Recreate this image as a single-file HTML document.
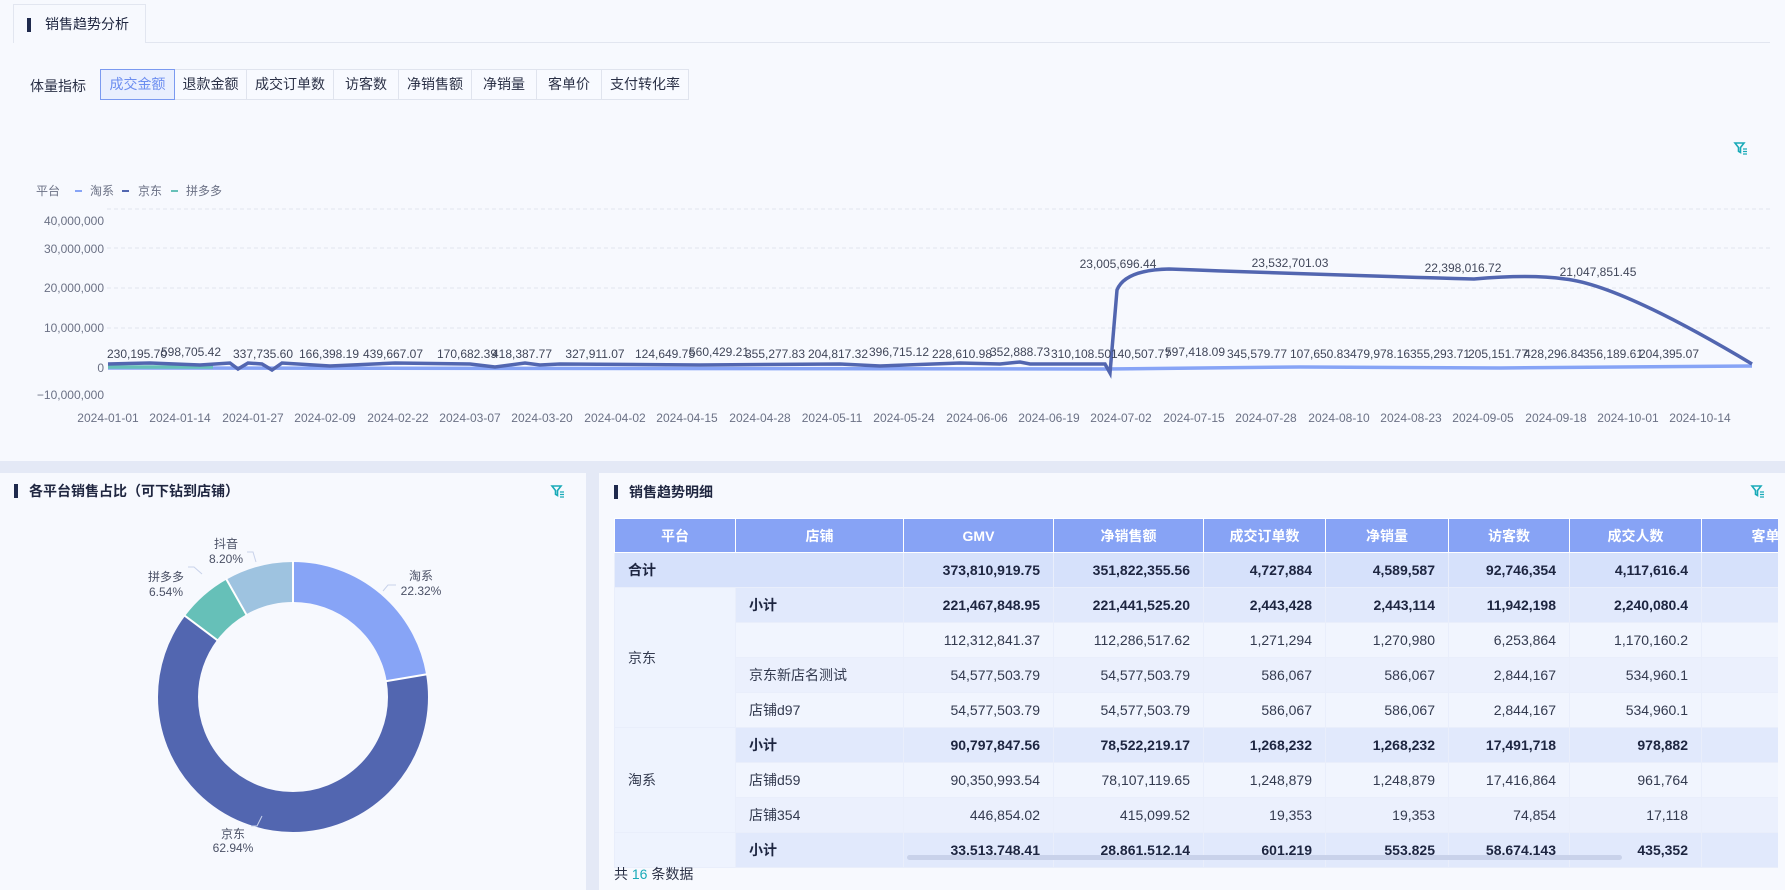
<!DOCTYPE html>
<html><head><meta charset="utf-8"><style>
*{margin:0;padding:0;box-sizing:border-box}
body{width:1785px;height:890px;background:#e4e9f6;font-family:"Liberation Sans","Noto Sans CJK SC",sans-serif;position:relative;overflow:hidden;color:#1f2640}
.abs{position:absolute}
.panel{position:absolute;background:#f7f9fe}
.tab{position:absolute;left:13px;top:4px;width:133px;height:39px;border:1px solid #e2e6f0;border-bottom:none;background:#f7f9fe;font-size:14px;line-height:38px;padding-left:31px;color:#1f2640}
.bar{position:absolute;width:4px;height:14px;background:#1f2a4d}
.btns{position:absolute;left:101px;top:69px;height:31px;display:flex}
.btns div{border:1px solid #e0e4ee;margin-left:-1px;font-size:14px;line-height:29px;text-align:center;color:#2a3046;background:#f8faff}
.btns .on{border-color:#7b9af0;color:#6d8ef0;background:#e9effe;z-index:2}
.ttl{position:absolute;font-size:14px;font-weight:bold;color:#1f2640}
table{border-collapse:collapse;table-layout:fixed;font-size:14px}
td,th{height:35px;border:1px solid #e9eefb;padding:0 13px;white-space:nowrap;overflow:hidden}
th{background:#87a3f5;color:#fff;font-weight:bold;height:34px;border-color:#fff;text-align:center}
td{text-align:right;color:#333a4f}
td.l{text-align:left}
tr.sum td{background:#d6e1fb;font-weight:bold;color:#1d2540}
tr.sub td{background:#e1e9fc;font-weight:bold;color:#1d2540}
tr.a td{background:#f1f5fe}
tr.b td{background:#ebf0fd}
td.pf{background:#eef3fe!important;font-weight:normal!important;color:#333a4f!important;text-align:left}
</style></head><body>
<div class="panel" style="left:0;top:0;width:1785px;height:461px"></div>
<div class="abs" style="left:13px;top:42px;width:1757px;height:1px;background:#e2e6f0"></div>
<div class="tab"><span class="bar" style="left:13px;top:13px"></span>销售趋势分析</div>
<div class="abs" style="left:30px;top:76px;font-size:14px;color:#2a3046">体量指标</div>
<div class="btns">
<div class="on" style="width:75px">成交金额</div><div style="width:73px">退款金额</div><div style="width:88px">成交订单数</div><div style="width:66px">访客数</div><div style="width:74px">净销售额</div><div style="width:66px">净销量</div><div style="width:66px">客单价</div><div style="width:88px">支付转化率</div>
</div>
<svg class="abs" style="left:1733px;top:140px" width="16" height="16" viewBox="0 0 16 16"><path d="M2 3h9l-3.5 4.5v5l-2-1.2V7.5z" fill="none" stroke="#19aab8" stroke-width="1.6"/><path d="M10 9h4M10 11.5h4M10 14h4" stroke="#19aab8" stroke-width="1.3"/></svg>
<svg class="abs" style="left:0;top:0" width="1785" height="461">
<g font-size="12" fill="#6b7185" font-family="Liberation Sans,Noto Sans CJK SC,sans-serif">
<text x="36" y="195">平台</text>
<rect x="75" y="190" width="7" height="2" fill="#87a4f6"/><text x="90" y="195">淘系</text>
<rect x="122" y="190" width="7" height="2" fill="#5266b0"/><text x="138" y="195">京东</text>
<rect x="171" y="190" width="7" height="2" fill="#66c0b8"/><text x="186" y="195">拼多多</text>
<g text-anchor="end"><text x="104" y="225">40,000,000</text><text x="104" y="253">30,000,000</text><text x="104" y="292">20,000,000</text><text x="104" y="332">10,000,000</text><text x="104" y="372">0</text><text x="104" y="399">−10,000,000</text></g>
</g>
<g stroke="#e2e5ee" stroke-dasharray="4 3"><line x1="107" y1="209" x2="1770" y2="209"/><line x1="107" y1="248" x2="1770" y2="248"/><line x1="107" y1="288" x2="1770" y2="288"/><line x1="107" y1="328" x2="1770" y2="328"/></g>
<path d="M108 368 L1105 369 L1300 367 L1500 368 L1752 366" fill="none" stroke="#87a4f6" stroke-width="3.5"/>
<path d="M108 367 L213 367" stroke="#66c0b8" stroke-width="3.5"/>
<path d="M108 364 L150 363 L200 365 L230 363 L238 369 L248 363 L262 364 L272 370 L282 363 L330 366 L395 363 L470 364 L495 367 L525 363 L540 365 L560 364 L700 365 L840 364 L880 366 L960 363 L1000 364 L1020 362 L1030 364 L1105 364 L1110 373 L1117 290 Q1125 270 1169 269 Q1300 274 1474 279 Q1530 274 1565 279 Q1620 285 1752 364" fill="none" stroke="#5266b0" stroke-width="3.5"/>
<g font-size="12" fill="#404659" text-anchor="middle" font-family="Liberation Sans,sans-serif">
<text x="137" y="358">230,195.70</text><text x="191" y="356">598,705.42</text><text x="263" y="358">337,735.60</text><text x="329" y="358">166,398.19</text><text x="393" y="358">439,667.07</text><text x="467" y="358">170,682.39</text><text x="522" y="358">418,387.77</text><text x="595" y="358">327,911.07</text><text x="665" y="358">124,649.75</text><text x="719" y="356">560,429.21</text><text x="775" y="358">355,277.83</text><text x="838" y="358">204,817.32</text><text x="899" y="356">396,715.12</text><text x="962" y="358">228,610.98</text><text x="1020" y="356">352,888.73</text><text x="1081" y="358">310,108.50</text><text x="1141" y="358">140,507.77</text><text x="1195" y="356">597,418.09</text><text x="1257" y="358">345,579.77</text><text x="1320" y="358">107,650.83</text><text x="1380" y="358">479,978.16</text><text x="1440" y="358">355,293.71</text><text x="1498" y="358">205,151.77</text><text x="1554" y="358">428,296.84</text><text x="1613" y="358">356,189.61</text><text x="1669" y="358">204,395.07</text>
<text x="1118" y="268">23,005,696.44</text><text x="1290" y="267">23,532,701.03</text><text x="1463" y="272">22,398,016.72</text><text x="1598" y="276">21,047,851.45</text>
</g>
<g font-size="12" fill="#6b7185" text-anchor="middle" font-family="Liberation Sans,sans-serif">
<text x="108" y="422">2024-01-01</text><text x="180" y="422">2024-01-14</text><text x="253" y="422">2024-01-27</text><text x="325" y="422">2024-02-09</text><text x="398" y="422">2024-02-22</text><text x="470" y="422">2024-03-07</text><text x="542" y="422">2024-03-20</text><text x="615" y="422">2024-04-02</text><text x="687" y="422">2024-04-15</text><text x="760" y="422">2024-04-28</text><text x="832" y="422">2024-05-11</text><text x="904" y="422">2024-05-24</text><text x="977" y="422">2024-06-06</text><text x="1049" y="422">2024-06-19</text><text x="1121" y="422">2024-07-02</text><text x="1194" y="422">2024-07-15</text><text x="1266" y="422">2024-07-28</text><text x="1339" y="422">2024-08-10</text><text x="1411" y="422">2024-08-23</text><text x="1483" y="422">2024-09-05</text><text x="1556" y="422">2024-09-18</text><text x="1628" y="422">2024-10-01</text><text x="1700" y="422">2024-10-14</text>
</g>
</svg>

<div class="panel" style="left:0;top:473px;width:586px;height:417px"></div>
<div class="panel" style="left:599px;top:473px;width:1186px;height:417px"></div>
<span class="bar abs" style="left:14px;top:484px"></span>
<div class="ttl" style="left:29px;top:481px">各平台销售占比（可下钻到店铺）</div>
<svg class="abs" style="left:550px;top:483px" width="16" height="16" viewBox="0 0 16 16"><path d="M2 3h9l-3.5 4.5v5l-2-1.2V7.5z" fill="none" stroke="#19aab8" stroke-width="1.6"/><path d="M10 9h4M10 11.5h4M10 14h4" stroke="#19aab8" stroke-width="1.3"/></svg>
<span class="bar abs" style="left:614px;top:485px"></span>
<div class="ttl" style="left:629px;top:482px">销售趋势明细</div>
<svg class="abs" style="left:1750px;top:483px" width="16" height="16" viewBox="0 0 16 16"><path d="M2 3h9l-3.5 4.5v5l-2-1.2V7.5z" fill="none" stroke="#19aab8" stroke-width="1.6"/><path d="M10 9h4M10 11.5h4M10 14h4" stroke="#19aab8" stroke-width="1.3"/></svg>

<svg class="abs" style="left:0;top:473px" width="586" height="417">
<g transform="translate(293,224) rotate(-90)" fill="none" stroke-width="40">
<circle r="115" stroke="#87a4f6" stroke-dasharray="161.28 800"/>
<circle r="115" stroke="#5266b0" stroke-dasharray="454.79 800" stroke-dashoffset="-161.28"/>
<circle r="115" stroke="#66c0b8" stroke-dasharray="47.26 800" stroke-dashoffset="-616.07"/>
<circle r="115" stroke="#9ec3e0" stroke-dasharray="59.25 800" stroke-dashoffset="-663.33"/>
<g stroke="#fff" stroke-width="2"><line x1="94" y1="0" x2="136" y2="0"/><line x1="94" y1="0" x2="136" y2="0" transform="rotate(80.35)"/><line x1="94" y1="0" x2="136" y2="0" transform="rotate(306.9)"/><line x1="94" y1="0" x2="136" y2="0" transform="rotate(330.5)"/></g>
</g>
<g fill="none" stroke="#c8d2ea" stroke-width="1"><path d="M383 118 l5 -6 h8"/><path d="M256 89 l-3 -10 h-6"/><path d="M202 101 l-8 -7 h-6"/><path d="M262 343 l-5 10 h-6"/></g>
<g font-size="12" fill="#4b5166" text-anchor="middle" font-family="Liberation Sans,Noto Sans CJK SC,sans-serif">
<text x="421" y="107">淘系</text><text x="421" y="122">22.32%</text>
<text x="226" y="75">抖音</text><text x="226" y="90">8.20%</text>
<text x="166" y="108">拼多多</text><text x="166" y="123">6.54%</text>
<text x="233" y="365">京东</text><text x="233" y="379">62.94%</text>
</g>
</svg>

<div class="abs" style="left:614px;top:518px;width:1164px;height:352px;overflow:hidden">
<table style="width:1229px">
<colgroup><col style="width:121px"><col style="width:168px"><col style="width:150px"><col style="width:150px"><col style="width:122px"><col style="width:123px"><col style="width:121px"><col style="width:132px"><col style="width:142px"></colgroup>
<tr><th>平台</th><th>店铺</th><th>GMV</th><th>净销售额</th><th>成交订单数</th><th>净销量</th><th>访客数</th><th>成交人数</th><th>客单价</th></tr>
<tr class="sum"><td class="l" colspan="2">合计</td><td>373,810,919.75</td><td>351,822,355.56</td><td>4,727,884</td><td>4,589,587</td><td>92,746,354</td><td>4,117,616.4</td><td></td></tr>
<tr class="sub"><td class="pf" rowspan="4">京东</td><td class="l">小计</td><td>221,467,848.95</td><td>221,441,525.20</td><td>2,443,428</td><td>2,443,114</td><td>11,942,198</td><td>2,240,080.4</td><td></td></tr>
<tr class="a"><td class="l"></td><td>112,312,841.37</td><td>112,286,517.62</td><td>1,271,294</td><td>1,270,980</td><td>6,253,864</td><td>1,170,160.2</td><td></td></tr>
<tr class="b"><td class="l">京东新店名测试</td><td>54,577,503.79</td><td>54,577,503.79</td><td>586,067</td><td>586,067</td><td>2,844,167</td><td>534,960.1</td><td>1</td></tr>
<tr class="a"><td class="l">店铺d97</td><td>54,577,503.79</td><td>54,577,503.79</td><td>586,067</td><td>586,067</td><td>2,844,167</td><td>534,960.1</td><td>1</td></tr>
<tr class="sub"><td class="pf" rowspan="3">淘系</td><td class="l">小计</td><td>90,797,847.56</td><td>78,522,219.17</td><td>1,268,232</td><td>1,268,232</td><td>17,491,718</td><td>978,882</td><td></td></tr>
<tr class="a"><td class="l">店铺d59</td><td>90,350,993.54</td><td>78,107,119.65</td><td>1,248,879</td><td>1,248,879</td><td>17,416,864</td><td>961,764</td><td></td></tr>
<tr class="b"><td class="l">店铺354</td><td>446,854.02</td><td>415,099.52</td><td>19,353</td><td>19,353</td><td>74,854</td><td>17,118</td><td></td></tr>
<tr class="sub"><td class="pf"></td><td class="l">小计</td><td>33,513,748.41</td><td>28,861,512.14</td><td>601,219</td><td>553,825</td><td>58,674,143</td><td>435,352</td><td></td></tr>
</table>
<div class="abs" style="left:293px;top:337px;width:715px;height:5px;border-radius:3px;background:#c9d2ea"></div>
</div>
<div class="abs" style="left:614px;top:864px;font-size:14px;color:#2a3046">共 <span style="color:#19aab8">16</span> 条数据</div>
</body></html>
